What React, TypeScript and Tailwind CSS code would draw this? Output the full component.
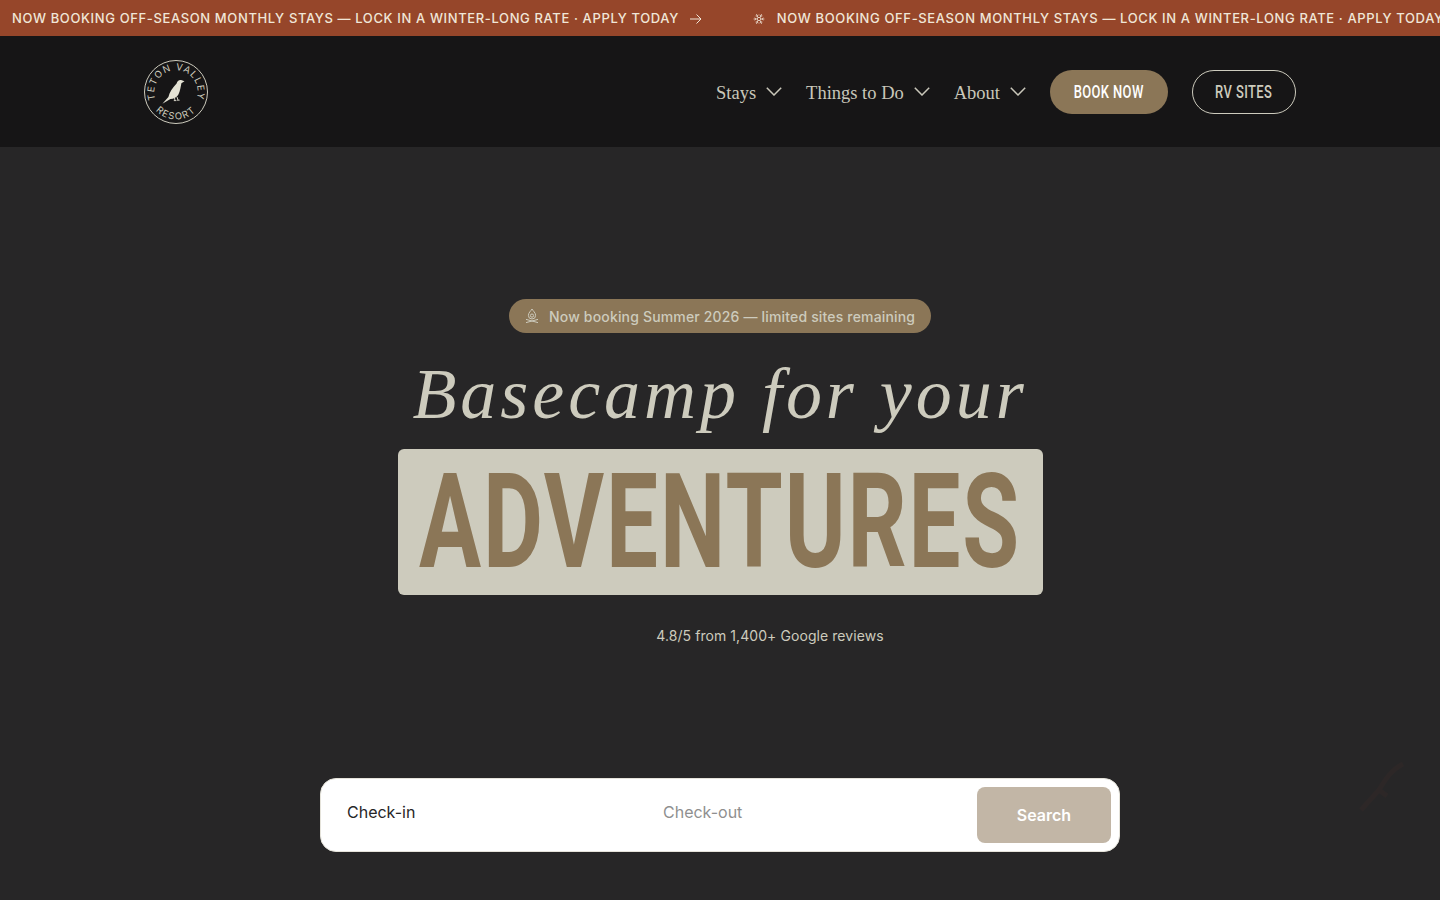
import { Snowflake } from "lucide-react";

const navLinks = ["Stays", "Things to Do", "About"];
const bannerText = "NOW BOOKING OFF-SEASON MONTHLY STAYS — LOCK IN A WINTER-LONG RATE · APPLY TODAY";

function Logo() {
  return (
    <svg viewBox="0 0 64 64" className="h-16 w-16 shrink-0" fill="none">
      <defs>
        <path id="logo-top" d="M12.5 41.5 A21.7 21.7 0 1 1 51.5 41.5" />
        <path id="logo-bottom" d="M8.2 45.8 A27.5 27.5 0 0 0 55.8 45.8" />
      </defs>
      <circle cx="32" cy="32" r="31.5" stroke="#cdcbbd" strokeWidth="1" />
      <text fill="#cdcbbd" fontSize="9.5" letterSpacing="1.1" fontFamily="Inter, sans-serif">
        <textPath href="#logo-top" startOffset="50%" textAnchor="middle">TETON VALLEY</textPath>
      </text>
      <text fill="#cdcbbd" fontSize="9.5" letterSpacing="1.3" fontFamily="Inter, sans-serif">
        <textPath href="#logo-bottom" startOffset="50%" textAnchor="middle">RESORT</textPath>
      </text>
      <path
        d="M40.5 21.2 L37.8 20.2 C35 19.4 33.4 21 32.6 23.4 C28.6 27.4 25.4 32.4 24.4 37 L18.4 43.8 L26.4 39 C29.8 39 32.8 37.6 34.4 34.6 C36.2 31 36.8 26.4 37.4 23.2 Z"
        fill="#e4e2d4"
      />
      <path d="M30.5 38 L31 40.5 M33 37 L34 40 M29.8 40.6 H32.4 M33 40.2 H35.6" stroke="#e4e2d4" strokeWidth="0.9" />
    </svg>
  );
}

function BannerItem() {
  return (
    <div className="flex shrink-0 items-center">
      <Snowflake className="mr-3 h-3 w-3 shrink-0 text-[#f0e6d8]" strokeWidth={1.5} />
      <span className="whitespace-nowrap">{bannerText}</span>
      <svg viewBox="0 0 12 12" className="ml-[11px] mr-[51px] h-3 w-3 shrink-0" fill="none" stroke="#f0e6d8" strokeWidth="1">
        <path d="M0 6 H10 M6.5 1.5 L11 6 L6.5 10.5" />
      </svg>
    </div>
  );
}

function CampIcon() {
  return (
    <svg viewBox="0 0 16 16" className="h-4 w-4 shrink-0" fill="none" stroke="#cdcbbd" strokeWidth="1">
      <path d="M8 1 C9 3 11.6 4.6 11.6 7.4 A3.6 3.6 0 0 1 4.4 7.4 C4.4 4.6 7 3 8 1 Z" />
      <circle cx="8" cy="7.6" r="1.6" />
      <path d="M2 11.4 L14 14.6 M14 11.4 L2 14.6" />
    </svg>
  );
}

function Chevron() {
  return (
    <svg viewBox="0 0 16 9" className="h-[9px] w-4 shrink-0" fill="none" stroke="#c9c7ba" strokeWidth="1.5">
      <path d="M0.8 0.8 L8 8 L15.2 0.8" />
    </svg>
  );
}

export default function App() {
  return (
    <div className="relative flex h-screen flex-col overflow-hidden bg-[#272627] font-['Inter',sans-serif]">
      {/* Banner */}
      <div className="flex h-9 shrink-0 items-center overflow-hidden bg-[#96462a] pt-px text-[13px] font-medium tracking-[0.048em] text-[#f0e6d8]">
        <div className="flex -ml-3">
          <BannerItem />
          <BannerItem />
        </div>
      </div>

      {/* Nav */}
      <header className="h-[111px] shrink-0 bg-[#161516]">
        <div className="mx-auto flex h-full max-w-[1152px] items-center justify-between">
          <Logo />
          <nav className="flex items-center gap-6">
            {navLinks.map((link) => (
              <a key={link} className="flex items-center gap-2.5 font-['Liberation_Serif',serif] text-[18.5px] text-[#c9c7ba]">
                <span className="pt-1">{link}</span>
                <Chevron />
              </a>
            ))}
            <a className="flex h-11 w-[118px] items-center justify-center rounded-full bg-[#8b7657] text-white">
              <span className="scale-x-[0.72] whitespace-nowrap font-['Roboto',sans-serif] text-lg font-medium tracking-[0.03em]">BOOK NOW</span>
            </a>
            <a className="flex h-11 w-[104px] items-center justify-center rounded-full border border-[#cdcbbd] text-[#cdcbbd]">
              <span className="scale-x-[0.72] whitespace-nowrap font-['Roboto',sans-serif] text-lg font-medium tracking-[0.03em]">RV SITES</span>
            </a>
          </nav>
        </div>
      </header>

      {/* Hero */}
      <main className="flex flex-1 flex-col items-center pt-[152px]">
        <div className="flex h-[34px] w-[422px] items-center gap-[9px] rounded-full bg-[#8b7657] pl-[15px] text-sm font-medium tracking-[0.012em] text-[#cdcbbd]">
          <CampIcon />
          <span className="whitespace-nowrap pt-px">Now booking Summer 2026 — limited sites remaining</span>
        </div>

        <h1 className="flex h-[116px] w-full items-center justify-center whitespace-nowrap pt-1.5 font-['Liberation_Serif',serif] text-[72px] font-normal italic leading-none tracking-[0.055em] text-[#cdcbbd]">
          Basecamp for your
        </h1>

        <div className="relative flex h-[146px] w-[645px] items-center justify-center rounded-md bg-[#cdcbbd]">
          <span className="shrink-0 scale-x-[0.7] whitespace-nowrap font-['Roboto',sans-serif] text-[132px] font-bold leading-none tracking-[0.02em] text-[#8b7657]">
            ADVENTURES
          </span>
        </div>

        <div className="mt-[31px] flex items-center gap-3 text-sm tracking-[0.005em] text-[#cdcbbd]">
          <div className="w-[88px]" />
          <span>4.8/5 from 1,400+ Google reviews</span>
        </div>

        <div className="mt-[132px] flex h-[74px] w-[800px] items-center rounded-2xl border border-[#e5e3da] bg-white pl-[26px] pr-2">
          <span className="mb-1.5 w-[316px] text-base text-[#272627]">Check-in</span>
          <span className="mb-1.5 flex-1 text-base text-[#8f8f8f]">Check-out</span>
          <button type="button" className="h-14 w-[134px] rounded-lg bg-[#c2b6a6] text-base font-semibold text-white">
            Search
          </button>
        </div>
      </main>

      {/* faint decoration over the hero, bottom right */}
      <svg viewBox="0 0 50 55" className="absolute left-[1355px] top-[760px] h-[55px] w-[50px] opacity-5" fill="none" stroke="#96462a" strokeWidth="5">
        <path d="M48 4 C36 10 30 20 24 30 L6 50 M24 30 L32 36" />
      </svg>
    </div>
  );
}
